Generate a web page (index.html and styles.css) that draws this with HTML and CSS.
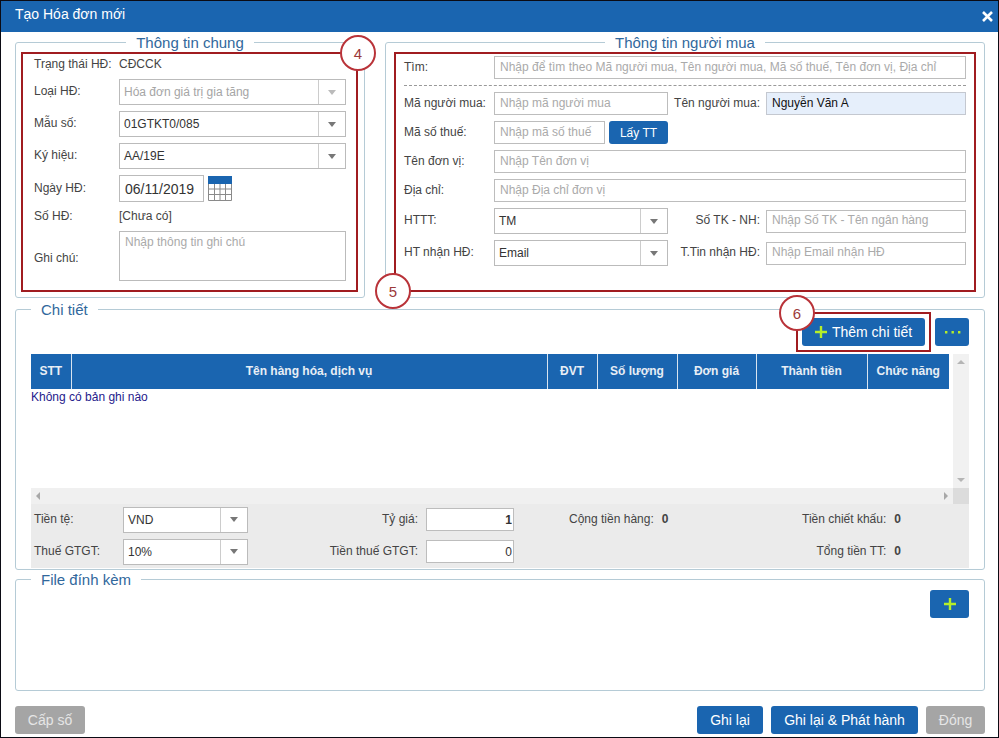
FILE: index.html
```html
<!DOCTYPE html>
<html lang="vi">
<head>
<meta charset="utf-8">
<title>Tạo Hóa đơn mới</title>
<link rel="stylesheet" href="styles.css">
</head>
<body>
<div class="modal">
  <header class="modal-head">
    <span class="modal-title">Tạo Hóa đơn mới</span>
    <svg class="close" width="11" height="11" viewBox="0 0 11 11"><path d="M1 1L10 10M10 1L1 10" stroke="#fff" stroke-width="2.6"/></svg>
  </header>
  <div class="modal-body">
    <div class="top-row">
      <fieldset class="box box-general">
        <legend class="legend-center">Thông tin chung</legend>
        <div class="marked marked-general">
          <span class="badge badge-4">4</span>
          <div class="line h19"><span class="lab-l lab-first">Trạng thái HĐ:</span><span>CĐCCK</span></div>
          <div class="line h26"><span class="lab-l">Loại HĐ:</span>
            <div class="combo combo-l combo-off"><span class="combo-text">Hóa đơn giá trị gia tăng</span><span class="combo-arrow"><i class="tri tri-off"></i></span></div></div>
          <div class="line h26"><span class="lab-l">Mẫu số:</span>
            <div class="combo combo-l"><span class="combo-text">01GTKT0/085</span><span class="combo-arrow"><i class="tri"></i></span></div></div>
          <div class="line h26"><span class="lab-l">Ký hiệu:</span>
            <div class="combo combo-l"><span class="combo-text">AA/19E</span><span class="combo-arrow"><i class="tri"></i></span></div></div>
          <div class="line h27"><span class="lab-l">Ngày HĐ:</span>
            <input class="date" value="06/11/2019">
            <svg class="cal" width="24" height="25" viewBox="0 0 24 25">
              <rect x="0" y="0" width="24" height="8" fill="#1a65b0"/>
              <path d="M.5 8V24.5H23.5V8M.5 13H23.5M.5 18.5H23.5M6.5 8V24.5M12 8V24.5M17.5 8V24.5" fill="none" stroke="#8a8a8a"/>
            </svg></div>
          <div class="line h17"><span class="lab-l">Số HĐ:</span><span class="val-up">[Chưa có]</span></div>
          <div class="line h50"><span class="lab-l lab-note">Ghi chú:</span>
            <textarea class="note" placeholder="Nhập thông tin ghi chú"></textarea></div>
        </div>
      </fieldset>
      <fieldset class="box box-buyer">
        <legend class="legend-center">Thông tin người mua</legend>
        <div class="marked marked-buyer">
          <span class="badge badge-5">5</span>
          <div class="line h23"><span class="lab-r">Tìm:</span><input class="inp grow" placeholder="Nhập để tìm theo Mã người mua, Tên người mua, Mã số thuế, Tên đơn vị, Địa chỉ"></div>
          <div class="dash"></div>
          <div class="line h23"><span class="lab-r">Mã người mua:</span><input class="inp w174" placeholder="Nhập mã người mua"><span class="lab-2">Tên người mua:</span><input class="inp grow inp-fill" value="Nguyễn Văn A"></div>
          <div class="line h23"><span class="lab-r">Mã số thuế:</span><input class="inp w111" placeholder="Nhập mã số thuế"><button class="btn btn-get">Lấy TT</button></div>
          <div class="line h23"><span class="lab-r">Tên đơn vị:</span><input class="inp grow" placeholder="Nhập Tên đơn vị"></div>
          <div class="line h23"><span class="lab-r">Địa chỉ:</span><input class="inp grow" placeholder="Nhập Địa chỉ đơn vị"></div>
          <div class="line h26"><span class="lab-r">HTTT:</span>
            <div class="combo w174"><span class="combo-text combo-tight">TM</span><span class="combo-arrow"><i class="tri"></i></span></div>
            <span class="lab-2">Số TK - NH:</span><input class="inp grow h23i" placeholder="Nhập Số TK - Tên ngân hàng"></div>
          <div class="line h26"><span class="lab-r">HT nhận HĐ:</span>
            <div class="combo w174"><span class="combo-text combo-tight">Email</span><span class="combo-arrow"><i class="tri"></i></span></div>
            <span class="lab-2">T.Tin nhận HĐ:</span><input class="inp grow h23i" placeholder="Nhập Email nhận HĐ"></div>
        </div>
      </fieldset>
    </div>

    <fieldset class="box box-detail">
      <legend>Chi tiết</legend>
      <div class="toolbar">
        <div class="add-wrap">
          <span class="mark-btn"></span>
          <span class="badge badge-6">6</span>
          <button class="btn btn-add"><svg class="plus" width="12" height="12" viewBox="0 0 12 12"><path d="M6 0V12M0 6H12" stroke="#b5ee2a" stroke-width="2.4"/></svg>Thêm chi tiết</button>
        </div>
        <button class="btn btn-more"><svg width="17" height="4" viewBox="0 0 17 4"><path d="M1 1h2.4v2.4H1zM7.5 1h2.4v2.4H7.5zM14 1h2.4v2.4H14z" fill="#b5ee2a"/></svg></button>
      </div>
      <div class="grid-area">
        <div class="grid-main">
          <table class="grid-table">
            <colgroup><col class="c1"><col class="c2"><col class="c3"><col class="c4"><col class="c5"><col class="c6"><col class="c7"></colgroup>
            <thead><tr><th>STT</th><th>Tên hàng hóa, dịch vụ</th><th>ĐVT</th><th>Số lượng</th><th>Đơn giá</th><th>Thành tiền</th><th>Chức năng</th></tr></thead>
          </table>
          <div class="empty">Không có bản ghi nào</div>
        </div>
        <div class="vbar"><i class="arrow arrow-up"></i><i class="arrow arrow-down"></i></div>
      </div>
      <div class="hbar-row">
        <div class="hbar"><i class="arrow arrow-left"></i><i class="arrow arrow-right"></i></div>
        <div class="corner"></div>
      </div>
      <div class="totals">
        <div class="tot-row">
          <span class="tot-lab">Tiền tệ:</span>
          <div class="combo w125"><span class="combo-text">VND</span><span class="combo-arrow"><i class="tri"></i></span></div>
          <span class="tot-mid">Tỷ giá:</span>
          <input class="inp num num-bold" value="1">
          <span class="tot-sum">Cộng tiền hàng:<b class="val">0</b></span>
          <span class="tot-end">Tiền chiết khấu:<b class="val">0</b></span>
        </div>
        <div class="tot-row">
          <span class="tot-lab">Thuế GTGT:</span>
          <div class="combo w125"><span class="combo-text">10%</span><span class="combo-arrow"><i class="tri"></i></span></div>
          <span class="tot-mid">Tiền thuế GTGT:</span>
          <input class="inp num" value="0">
          <span class="tot-sum"></span>
          <span class="tot-end">Tổng tiền TT:<b class="val">0</b></span>
        </div>
      </div>
    </fieldset>

    <fieldset class="box box-file">
      <legend>File đính kèm</legend>
      <div class="file-body">
        <button class="btn btn-plus"><svg width="12" height="12" viewBox="0 0 12 12"><path d="M6 0V12M0 6H12" stroke="#b5ee2a" stroke-width="2.4"/></svg></button>
      </div>
    </fieldset>

    <footer class="actions">
      <button class="btn btn-off btn-cap">Cấp số</button>
      <div class="actions-right">
        <button class="btn btn-save">Ghi lại</button>
        <button class="btn btn-pub">Ghi lại &amp; Phát hành</button>
        <button class="btn btn-off btn-close">Đóng</button>
      </div>
    </footer>
  </div>
</div>
</body>
</html>
```

FILE: styles.css
```css
* { box-sizing: border-box; }
html, body { margin: 0; padding: 0; }
body { font-family: "Liberation Sans", Arial, sans-serif; font-size: 12px; color: #444; background: #fff; }
.modal { width: 999px; height: 738px; border: 1px solid #0b0b14; background: #fff; display: flex; flex-direction: column; overflow: hidden; }
.modal-head { height: 31px; background: #1a65b0; color: #fff; display: flex; align-items: center; justify-content: space-between; padding: 0 5px 6px 14px; flex: none; }
.modal-title { font-size: 14px; }
.close { display: block; margin-top: 5px; }
.modal-body { flex: 1; padding: 0 13px 0 14px; display: flex; flex-direction: column; }

.top-row { display: flex; gap: 20px; }
.box { margin: 0; padding: 0; min-width: 0; border: 1px solid #b5cbd6; border-radius: 3px; }
.box legend { font-size: 15px; line-height: 18px; color: #31689c; padding: 2px 10px 0; }
.legend-center { margin: 0 auto; }
.box-general { width: 350px; padding: 0 0 5px; }
.box-buyer { width: 600px; padding: 0 0 5px; }
.marked { position: relative; height: 240px; border: 2px solid #a01c20; }
.marked-general { width: 337px; margin-left: 5px; }
.marked-buyer { width: 582px; margin-left: 8px; padding: 2px 8px 0 8px; }

.badge { position: absolute; width: 36px; height: 36px; border: 2px solid #b93339; border-radius: 50%; background: #fff; color: #9c3a3a; font-size: 15px; display: flex; align-items: center; justify-content: center; z-index: 2; }
.badge-4 { left: 317px; top: -19px; }
.badge-5 { left: -21px; top: 219px; }
.badge-6 { left: -23px; top: -23px; }

.line { display: flex; align-items: center; margin-bottom: 6px; }
.h17 { height: 17px; }
.h19 { height: 19px; }
.h23 { height: 23px; }
.h26 { height: 26px; }
.h27 { height: 27px; }
.h50 { height: 50px; }
.lab-l { width: 96px; padding: 0 0 2px 11px; flex: none; }
.lab-first { padding-bottom: 0; }
.lab-note { padding: 4px 0 0 11px; }
.val-up { padding-bottom: 2px; }
.lab-r { width: 90px; flex: none; padding-bottom: 2px; }
.lab-2 { width: 98px; flex: none; text-align: right; padding: 0 6px 2px 0; }
.grow { flex: 1; min-width: 0; }
.w174 { width: 174px; flex: none; }
.w111 { width: 111px; flex: none; }
.w125 { width: 125px; flex: none; }

.inp { height: 23px; border: 1px solid #bdbdbd; padding: 0 5px 2px; font: 12px "Liberation Sans", Arial, sans-serif; color: #333; background: #fff; outline: none; }
.inp::placeholder, .note::placeholder { color: #aaa; opacity: 1; }
.inp-fill { background: #e6effb; color: #111; border-color: #c4c8d0; }
.dash { border-top: 1px dashed #999; height: 1px; margin-bottom: 6px; }

.combo { height: 26px; border: 1px solid #bbb; display: flex; align-items: center; background: #fff; color: #333; }
.combo-l { width: 227px; flex: none; }
.combo-text { flex: 1; padding-left: 4px; white-space: nowrap; }
.combo-tight { padding-left: 4px; }
.combo-off { color: #a5a5a5; }
.combo-arrow { width: 27px; height: 100%; border-left: 1px solid #ccc; display: flex; align-items: center; justify-content: center; flex: none; }
.tri { width: 0; height: 0; border-left: 4px solid transparent; border-right: 4px solid transparent; border-top: 5px solid #777; display: block; }
.tri-off { border-top-color: #bbb; }

.date { width: 85px; height: 27px; border: 1px solid #bbb; padding: 0 5px; font: 14px "Liberation Sans", Arial, sans-serif; color: #333; outline: none; }
.cal { display: block; margin-left: 4px; margin-top: -1px; }
.note { width: 227px; height: 50px; border: 1px solid #bbb; padding: 3px 5px; font: 12px "Liberation Sans", Arial, sans-serif; resize: none; outline: none; display: block; }

.btn { border: 0; border-radius: 3px; background: #1a65b0; color: #fff; font: 14px "Liberation Sans", Arial, sans-serif; height: 28px; padding: 0; display: flex; align-items: center; justify-content: center; flex: none; }
.btn-get { width: 59px; height: 23px; margin-left: 4px; font-size: 12px; }
.btn-off { background: #a5a5a5; color: #e6e6e6; }

.box-detail { width: 970px; margin-top: 2px; padding: 0 15px; height: 270px; }
.box-detail legend, .box-file legend { line-height: 16px; }
.toolbar { display: flex; justify-content: flex-end; gap: 10px; height: 28px; margin-bottom: 8px; }
.add-wrap { position: relative; width: 123px; }
.mark-btn { position: absolute; left: -6px; top: -6px; right: -6px; bottom: -6px; border: 2px solid #a01c20; }
.btn-add { position: relative; width: 123px; }
.plus { margin-right: 5px; }
.btn-more { width: 34px; }

.grid-area { display: flex; height: 134px; justify-content: space-between; }
.grid-main { width: 918px; }
.grid-table { width: 918px; table-layout: fixed; border-collapse: collapse; }
.c1 { width: 40px; }
.c2 { width: 476px; }
.c3 { width: 50px; }
.c4 { width: 80px; }
.c5 { width: 79px; }
.c6 { width: 111px; }
.c7 { width: 82px; }
.grid-table th { height: 35px; padding: 0 0 2px; background: #1a65b0; color: #e8eef5; font-size: 12px; font-weight: bold; border-right: 1px solid #d8e4f0; }
.grid-table th:last-child { border-right: 0; }
.empty { color: #26208c; margin-top: 1px; line-height: 14px; }
.vbar { width: 16px; height: 134px; background: #f1f1f1; display: flex; flex-direction: column; justify-content: space-between; align-items: center; padding: 6px 0; }
.hbar-row { display: flex; height: 16px; }
.hbar { flex: 1; background: #f0f0f0; display: flex; justify-content: space-between; align-items: center; padding: 0 5px; }
.corner { width: 16px; background: #dcdcdc; }
.arrow { width: 0; height: 0; display: block; }
.arrow-up { border-left: 4px solid transparent; border-right: 4px solid transparent; border-bottom: 4px solid #b5b5b5; }
.arrow-down { border-left: 4px solid transparent; border-right: 4px solid transparent; border-top: 4px solid #b5b5b5; }
.arrow-left { border-top: 4px solid transparent; border-bottom: 4px solid transparent; border-right: 4px solid #a8a8a8; }
.arrow-right { border-top: 4px solid transparent; border-bottom: 4px solid transparent; border-left: 4px solid #a8a8a8; }

.totals { background: #ebebeb; height: 64px; padding-top: 3px; }
.tot-row { display: flex; align-items: center; height: 25px; margin-bottom: 7px; }
.tot-lab { width: 92px; padding: 0 0 2px 3px; flex: none; }
.tot-mid { width: 170px; text-align: right; flex: none; padding-bottom: 2px; }
.num { width: 88px; margin-left: 8px; text-align: right; padding: 0 1px; flex: none; }
.num-bold { font-weight: bold; }
.tot-sum { width: 155px; padding: 0 0 2px 55px; flex: none; white-space: nowrap; }
.tot-end { width: 232px; text-align: right; flex: none; white-space: nowrap; padding-bottom: 2px; }
.val { font-weight: bold; margin-left: 8px; color: #444; }

.box-file { width: 970px; padding: 0 15px; }
.file-body { height: 102px; display: flex; justify-content: flex-end; padding-top: 2px; }
.btn-plus { width: 39px; }

.actions { display: flex; justify-content: space-between; margin-top: 15px; }
.actions-right { display: flex; gap: 8px; }
.btn-cap { width: 70px; }
.btn-save { width: 66px; }
.btn-pub { width: 147px; }
.btn-close { width: 59px; }
```
